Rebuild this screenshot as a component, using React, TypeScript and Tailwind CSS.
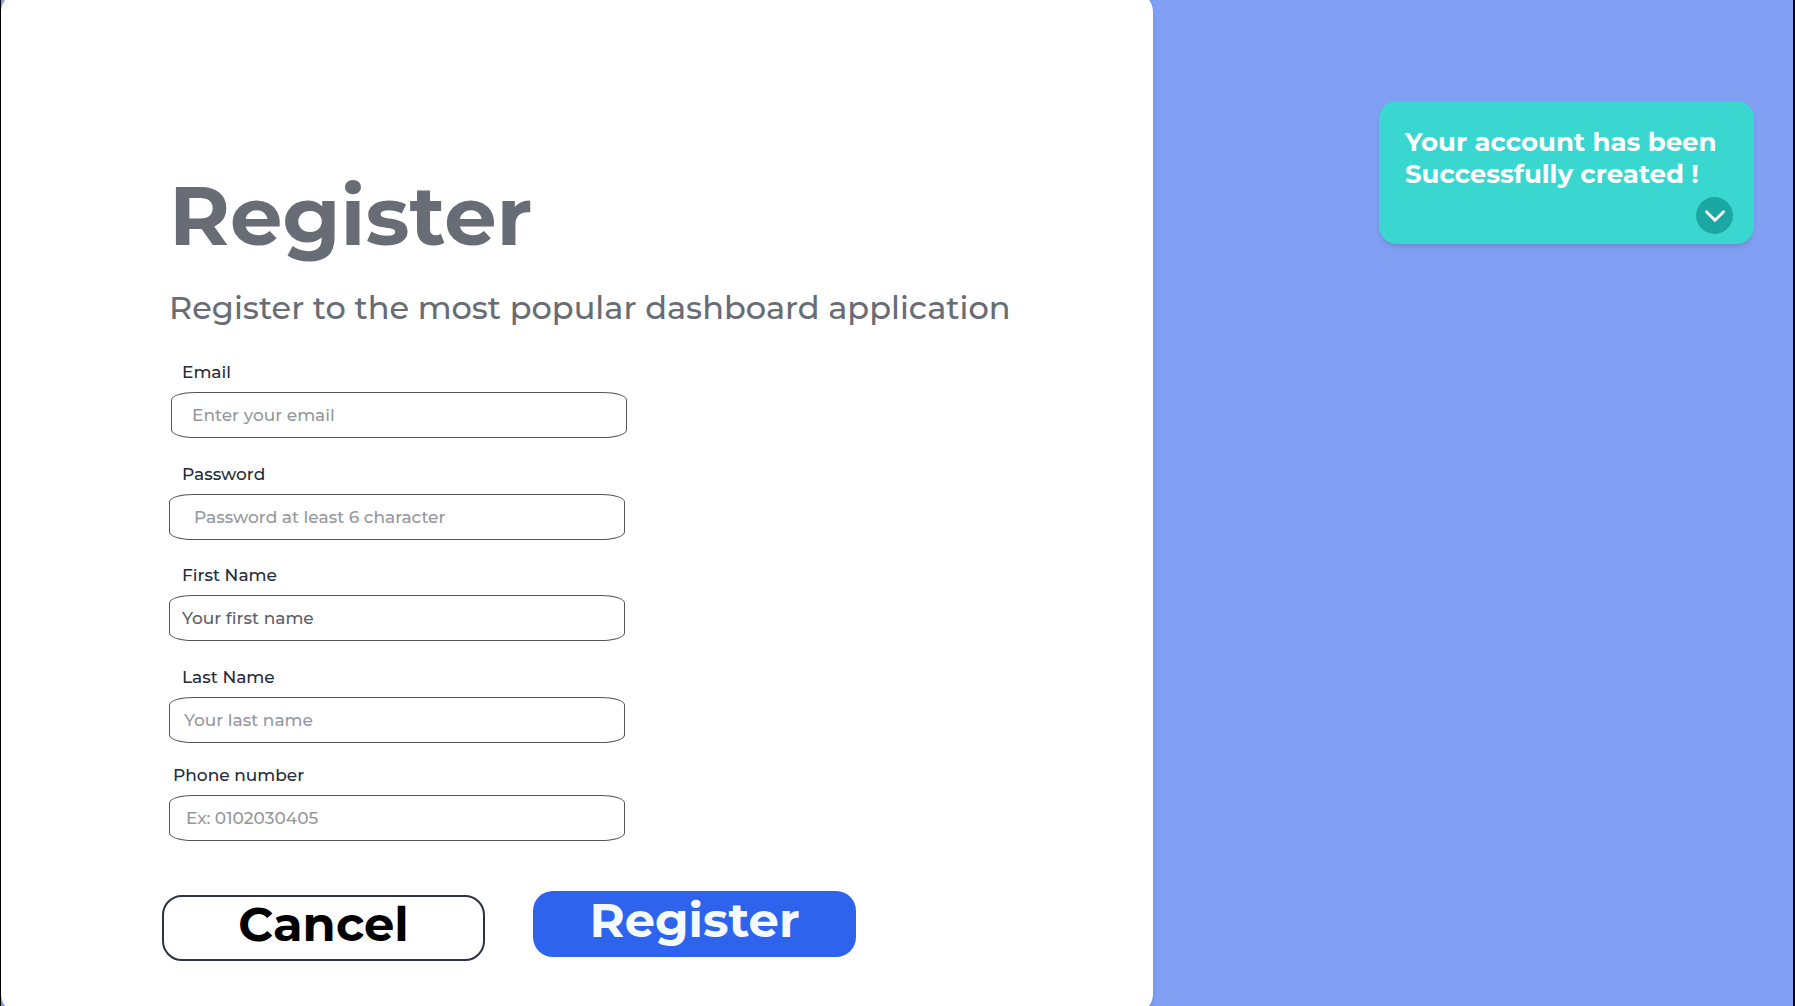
import { ChevronDown } from "lucide-react";

type Field = {
  id: string;
  label: string;
  type: string;
  placeholder: string;
  wrapper: string;
  labelPad: string;
  inputStyle: string;
};

const fields: Field[] = [
  { id: "email", label: "Email", type: "email", placeholder: "Enter your email", wrapper: "", labelPad: "pl-[13px]", inputStyle: "ml-0.5 pl-5 placeholder:text-[#94979d]" },
  { id: "password", label: "Password", type: "password", placeholder: "Password at least 6 character", wrapper: "mt-6", labelPad: "pl-[13px]", inputStyle: "pl-6 placeholder:text-[#94979d]" },
  { id: "first-name", label: "First Name", type: "text", placeholder: "Your first name", wrapper: "mt-[23px]", labelPad: "pl-[13px]", inputStyle: "pl-3 placeholder:text-[#5c606a]" },
  { id: "last-name", label: "Last Name", type: "text", placeholder: "Your last name", wrapper: "mt-6", labelPad: "pl-[13px]", inputStyle: "pl-3.5 placeholder:text-[#94979d]" },
  { id: "phone", label: "Phone number", type: "tel", placeholder: "Ex: 0102030405", wrapper: "mt-5", labelPad: "pl-1", inputStyle: "pl-4 placeholder:text-[#94979d]" },
];

function TextField({ field }: { field: Field }) {
  return (
    <div className={`flex flex-col gap-2 ${field.wrapper}`}>
      <label htmlFor={field.id} className={`text-[17px] leading-6 font-medium text-[#252b3b] ${field.labelPad}`}>
        {field.label}
      </label>
      <input
        id={field.id}
        type={field.type}
        placeholder={field.placeholder}
        className={`h-[46px] w-[456px] rounded-[24px/8px] border border-[#55565a] bg-white text-[17px] font-medium text-[#5c606a] outline-none placeholder:opacity-100 ${field.inputStyle}`}
      />
    </div>
  );
}

function Toast() {
  return (
    <div role="status" className="flex h-[143px] w-[375px] flex-col justify-between rounded-[18px] bg-[#3ad7d1] pt-[25px] pr-[21px] pb-2.5 pl-[26px] shadow-md">
      <p className="text-[26px] leading-8 font-bold whitespace-nowrap text-white">
        Your account has been
        <br />
        Successfully created !
      </p>
      <button type="button" aria-label="Expand" className="flex size-[37px] items-center justify-center self-end rounded-full bg-[#1ba8a3] text-white">
        <ChevronDown size={34} strokeWidth={2} />
      </button>
    </div>
  );
}

export default function App() {
  return (
    <div className="flex h-screen overflow-hidden border-r-2 border-l border-black bg-[#81a0f3] font-['Montserrat','Inter',sans-serif]">
      <main className="-my-2 w-[64.3%] shrink-0 rounded-[20px] bg-white pt-[174px] pl-[168px] shadow-md">
        <h1 className="text-[83px] leading-[100px] font-bold text-[#686c75]">Register</h1>
        <p className="mt-[22px] text-[32px] leading-10 font-medium whitespace-nowrap text-[#686c75]">
          Register to the most popular dashboard application
        </p>
        <form className="mt-8">
          {fields.map((field) => (
            <TextField key={field.id} field={field} />
          ))}
          <div className="mt-[50px] -ml-[7px] flex items-start gap-12">
            <button type="button" className="mt-1 flex h-[66px] w-[323px] items-center justify-center rounded-[20px] border-2 border-[#2c3243] bg-white pb-2 text-[48px] leading-none font-bold text-black">
              Cancel
            </button>
            <button type="submit" className="flex h-[66px] w-[323px] items-center justify-center rounded-[20px] bg-[#2d63ed] pb-2 text-[48px] leading-none font-bold text-[#f5faff]">
              Register
            </button>
          </div>
        </form>
      </main>
      <aside className="flex flex-1 items-start justify-end pt-[101px] pr-[39px]">
        <Toast />
      </aside>
    </div>
  );
}
